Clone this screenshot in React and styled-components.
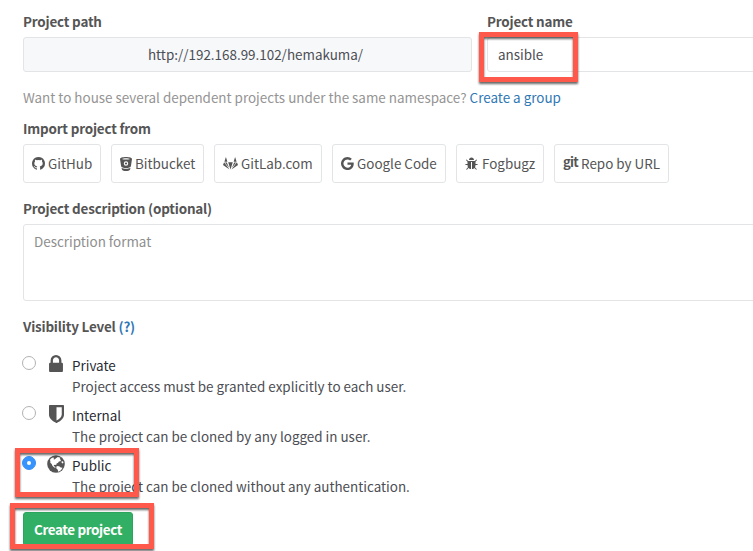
import React from "react";
import styled, { createGlobalStyle } from "styled-components";

const Global = createGlobalStyle`
  * { box-sizing: border-box; }
  html, body { margin: 0; background: #fff; overflow: hidden; }
  body, button, input, textarea {
    font-family: "Noto Sans CJK SC", "Open Sans", sans-serif;
    font-size: 13.43px;
    line-height: 20px;
    color: #4c4e54;
  }
`;

const Page = styled.main`
  position: relative;
  display: flex;
  flex-direction: column;
  width: 753px;
  height: 551px;
  padding: 11px 0 0 23px;
  overflow: hidden;
`;

const Label = styled.div`
  height: 20px;
  color: #555;
  font-weight: 700;
  white-space: nowrap;
  letter-spacing: -0.18px;
`;

const FieldRow = styled.div`
  display: grid;
  grid-template-columns: 449px 449px;
  column-gap: 15px;
`;

const Field = styled.div`
  display: flex;
  flex-direction: column;
  gap: 6px;
`;

const Control = styled.div`
  height: 35px;
  padding: ${(p) => (p.$filled ? "6px 10px 6px 26px" : "6px 10px")};
  border: 1px solid #e3e4e6;
  border-radius: 3px;
  background: ${(p) => (p.$filled ? "#f7f8fa" : "#fff")};
  text-align: ${(p) => (p.$filled ? "center" : "left")};
`;

const Help = styled.p`
  margin: 15px 0 11px;
  height: 20px;
  color: #959494;
  white-space: nowrap;
`;

const Link = styled.a`
  color: #3077b5;
  text-decoration: none;
`;

const Sources = styled.div`
  display: flex;
  gap: 10px;
  margin: 6px 0 15px;
`;

const Source = styled.button`
  display: flex;
  align-items: center;
  width: ${(p) => p.$width}px;
  height: 39px;
  padding: 0 0 0 8px;
  gap: ${(p) => p.$gap || 3}px;
  border: 1px solid #e3e4e6;
  border-radius: 3px;
  background: #fff;
  color: #555;
  white-space: nowrap;
  svg { flex: none; }
`;

const SourceName = styled.span`
  margin-top: -2px;
`;

const GitWord = styled.span`
  width: 14px;
  margin-top: -4px;
  font-size: 13px;
  font-weight: 700;
  letter-spacing: -0.7px;
`;

const Description = styled.div`
  width: 913px;
  height: 77px;
  margin: 6px 0 15px;
  padding: 6px 10px;
  border: 1px solid #e3e4e6;
  border-radius: 3px;
  color: #8e8e8e;
`;

const Levels = styled.div`
  display: flex;
  flex-direction: column;
  gap: 8px;
  margin-top: 20px;
`;

const Level = styled.label`
  display: grid;
  grid-template-columns: 25px 24px auto;
  height: 42px;
`;

const Radio = styled.span`
  display: grid;
  place-items: center;
  width: 14px;
  height: 14px;
  margin-left: -1px;
  border: 1px solid ${(p) => (p.$on ? "#3490f8" : "#b2b2b2")};
  border-radius: 50%;
  background: ${(p) => (p.$on ? "#3794fc" : "#fff")};
  &::after {
    content: "";
    width: 4px;
    height: 4px;
    border-radius: 50%;
    background: #fff;
  }
`;

const LevelIcon = styled.span`
  display: flex;
  justify-content: center;
  width: 16px;
  height: 18px;
  margin-top: -1px;
  color: #555;
  svg { flex: none; }
`;

const LevelText = styled.div`
  display: flex;
  flex-direction: column;
  gap: 1px;
  margin-top: -1px;
  white-space: nowrap;
`;

const LevelName = styled.span`
  color: #292c34;
`;

const Submit = styled.button`
  width: 110px;
  height: 34px;
  margin-top: 14px;
  padding: 0;
  border: 1px solid #2ca55c;
  border-radius: 3px;
  background: #31af64;
  color: #fff;
  font-weight: 700;
  letter-spacing: -0.38px;
  white-space: nowrap;
`;

const Marker = styled.div`
  position: absolute;
  left: ${(p) => p.$x}px;
  top: ${(p) => p.$y}px;
  width: ${(p) => p.$w}px;
  height: ${(p) => p.$h}px;
  border: 5px solid #ff594b;
  filter: drop-shadow(0 2px 1px rgba(0, 0, 0, 0.6));
  pointer-events: none;
`;

const Glyph = ({ size, box = "0 0 1792 1792", children, h }) => (
  <svg width={size} height={h || size} viewBox={box} fill="currentColor">{children}</svg>
);

const GitHub = () => (
  <Glyph size={13} box="128 128 1536 1536">
    <path d="M896 128q209 0 385.500 103t279.500 279.500 103 385.500q0 251-146.500 451.500t-378.500 274.500q-27 5-40-7t-13-30q0-3 .5-76.500t.5-134.500q0-97-52-142 57-6 102.500-18t94-39 81-66.500 53-105 20.500-150.500q0-119-79-206 37-91-8-204-28-9-81 11t-92 44l-38 24q-93-26-192-26t-192 26q-16-11-42.500-27t-83.500-38.500-85-13.500q-45 113-8 204-79 87-79 206 0 85 20.500 150t52.500 105 80.500 67 94 39 102.500 18q-39 36-49 103-21 10-45 15t-57 5-65.500-21.500-55.500-62.500q-19-32-48.500-52t-49.500-24l-20-3q-21 0-29 4.500t-5 11.500 9 14 13 12l7 5q22 10 43.500 38t31.500 51l10 23q13 38 44 61.500t67 30 69.500 7 55.500-3.500l23-4q0 38 .5 88.500t.5 54.500q0 18-13 30t-40 7q-232-74-378.500-274.500t-146.500-451.500q0-209 103-385.500t279.500-279.500 385.500-103z" />
  </Glyph>
);

const Bitbucket = () => (
  <Glyph size={12} h={14} box="0 0 12 14">
    <path fillRule="evenodd" d="M0 2C0 .7 2.800 0 6 0s6 .7 6 2l-1.100 7.200C10.600 10.300 8.500 11 6 11s-4.600-.7-4.900-1.800zM2 1.900C2.800 2.400 4.300 2.600 6 2.600s3.200-.2 4-.7C9.200 1.400 7.700 1.200 6 1.200s-3.200.2-4 .7zM6 4.300a2.200 2.200 0 1 0 0 4.400 2.200 2.200 0 0 0 0-4.400z" />
    <circle cx="6" cy="6.500" r="1.100" />
    <path d="M1.500 10.800c2.400 1.400 6.600 1.400 9 0l-.5 2C9.500 13.600 7.900 14 6 14s-3.500-.4-4-1.200z" />
  </Glyph>
);

const GitLab = () => (
  <Glyph size={15} h={13} box="0 0 15 13">
    <path d="M2.900 0 4.400 4.800H1.400zM12.100 0l1.500 4.800h-3zM5.200 5.300h4.600L7.500 12.600zM1.100 5.300 0 7.900l6.500 4.700zM13.900 5.300 15 7.900l-6.500 4.700zM1.900 5.500h1.900l2.400 5.600zM13.100 5.500h-1.900l-2.400 5.600z" />
  </Glyph>
);

const Google = () => (
  <Glyph size={13} box="0 0 1536 1536">
    <path d="M768 664h725q12 67 12 128 0 217-91 387.500t-259.500 266.500-386.500 96q-157 0-299-60.500t-245-163.500-163.500-245-60.500-299 60.500-299 163.500-245 245-163.500 299-60.500q300 0 515 201l-209 201q-123-119-306-119-129 0-238.500 65t-173.500 176.500-64 243.500 64 243.500 173.500 176.500 238.500 65q87 0 160-24t120-60 82-82 51.500-87 22.500-78h-436z" />
  </Glyph>
);

const Bug = () => (
  <Glyph size={14}>
    <path d="M1632 960q0 26-19 45t-45 19h-224q0 171-67 290l208 209q19 19 19 45t-19 45q-18 19-45 19t-45-19l-198-197q-5 5-15 13t-42 28.500-65 36.500-82 29-97 13v-896h-128v896q-51 0-101.500-13.500t-87-33-66-39-43.500-32.500l-15-14-183 207q-20 21-48 21-24 0-43-16-19-18-20.500-44.500t15.500-46.500l202-227q-58-114-58-274h-224q-26 0-45-19t-19-45 19-45 45-19h224v-294l-173-173q-19-19-19-45t19-45 45-19 45 19l173 173h844l173-173q19-19 45-19t45 19 19 45-19 45l-173 173v294h224q26 0 45 19t19 45zm-480-576h-640q0-133 93.500-226.500t226.500-93.500 226.500 93.500 93.500 226.500z" />
  </Glyph>
);

const Lock = () => (
  <Glyph size={14} h={17} box="320 128 1152 1408">
    <path d="M640 768h512v-192q0-106-75-181t-181-75-181 75-75 181v192zm832 96v576q0 40-28 68t-68 28h-960q-40 0-68-28t-28-68v-576q0-40 28-68t68-28h32v-192q0-184 132-316t316-132 316 132 132 316v192h32q40 0 68 28t28 68z" />
  </Glyph>
);

const Shield = () => (
  <Glyph size={15} h={18} box="256 128 1280 1536">
    <path d="M1344 960v-640h-448v1137q119-63 213-137 235-184 235-360zm192-768v768q0 86-33.500 170.500t-83 150-118 127.500-126.500 103-121 77.500-89.500 49.500-42.500 20q-12 6-26 6t-26-6q-16-7-42.500-20t-89.500-49.500-121-77.500-126.500-103-118-127.500-83-150-33.500-170.500v-768q0-26 19-45t45-19h1152q26 0 45 19t19 45z" />
  </Glyph>
);

const Globe = () => (
  <Glyph size={18} box="0 0 18 18">
    <circle cx="9" cy="9" r="8.800" />
    <path
      fill="#fff"
      d="M2.900 4.800 4.400 3.300 6 2.600l1.300.4-1 .9 1.200.6 1.500-1.300 1.800-1.200 2.700.8-.8 1.300 1.300 1-.5 1.200-1.600.2-.8 1.300-1.500.8-.4 1.500-1.300-.4-1.200.6.4 1 1.200.4.1 1.200-1.400-.6-1.600-1.500-.7-1.700-1.400-1.300.1-1.500zM9.300 11.500l1.500-.6 1.800.6 1.100 1 1.800.3-.8 1.500-1.700 1.600-1.900.8-.3-1.900-1.400-1.400zM14.500 6.500l1.500-.3.500 1.500-.8.900-1.100-.8z"
    />
  </Glyph>
);

const sources = [
  { name: "GitHub", width: 78, Icon: GitHub },
  { name: "Bitbucket", width: 93, Icon: Bitbucket },
  { name: "GitLab.com", width: 108, Icon: GitLab },
  { name: "Google Code", width: 114, Icon: Google },
  { name: "Fogbugz", width: 88, Icon: Bug },
];

const levels = [
  { name: "Private", text: "Project access must be granted explicitly to each user.", Icon: Lock },
  { name: "Internal", text: "The project can be cloned by any logged in user.", Icon: Shield },
  { name: "Public", text: "The project can be cloned without any authentication.", Icon: Globe, on: true },
];

export default function App() {
  return (
    <>
      <Global />
      <Page>
        <FieldRow>
          <Field>
            <Label>Project path</Label>
            <Control $filled>http://192.168.99.102/hemakuma/</Control>
          </Field>
          <Field>
            <Label>Project name</Label>
            <Control>ansible</Control>
          </Field>
        </FieldRow>
        <Help>
          Want to house several dependent projects under the same namespace? <Link>Create a group</Link>
        </Help>
        <Label>Import project from</Label>
        <Sources>
          {sources.map(({ name, width, Icon }) => (
            <Source key={name} $width={width}>
              <Icon />
              <SourceName>{name}</SourceName>
            </Source>
          ))}
          <Source $width={115} $gap={4}>
            <GitWord>git</GitWord>
            <SourceName>Repo by URL</SourceName>
          </Source>
        </Sources>
        <Label>Project description (optional)</Label>
        <Description>Description format</Description>
        <Label>
          Visibility Level <Link>(?)</Link>
        </Label>
        <Levels>
          {levels.map(({ name, text, Icon, on }) => (
            <Level key={name}>
              <Radio $on={on} />
              <LevelIcon><Icon /></LevelIcon>
              <LevelText>
                <LevelName>{name}</LevelName>
                <span>{text}</span>
              </LevelText>
            </Level>
          ))}
        </Levels>
        <Submit>Create project</Submit>
        <Marker $x={479} $y={32} $w={99} $h={50} />
        <Marker $x={15} $y={448} $w={124} $h={49} />
        <Marker $x={10} $y={503} $w={144} $h={46} />
      </Page>
    </>
  );
}
